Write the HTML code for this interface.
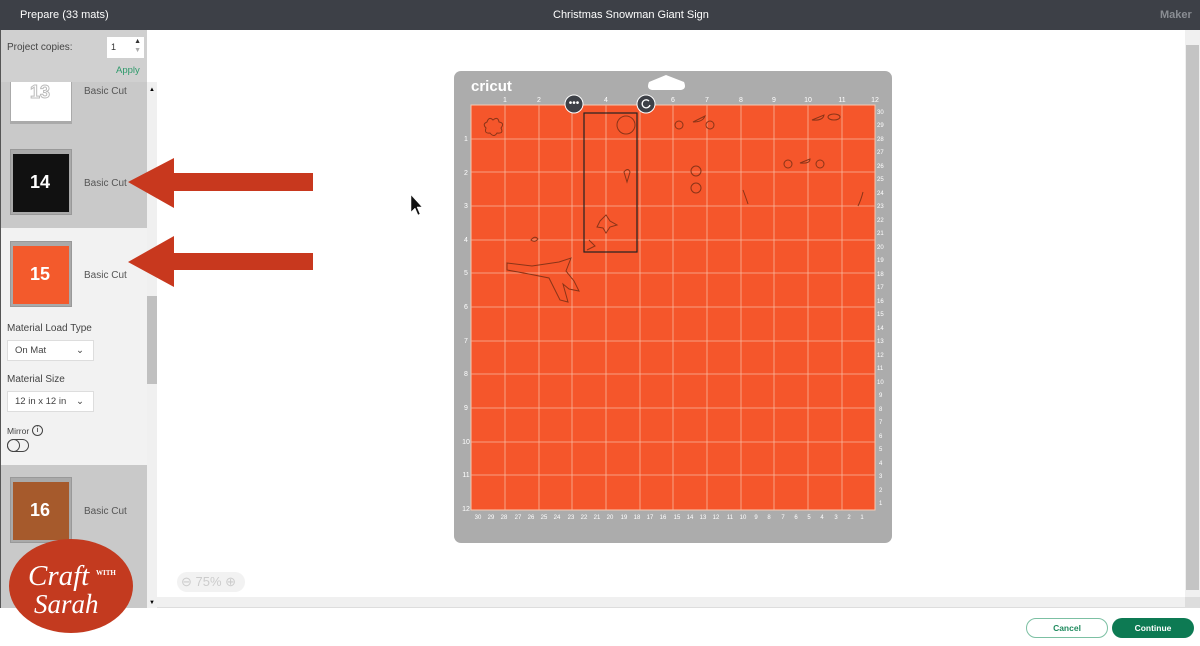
<!DOCTYPE html>
<html><head><meta charset="utf-8"><style>
*{margin:0;padding:0;box-sizing:border-box}
body{width:1200px;height:646px;overflow:hidden;background:#fff;font-family:"Liberation Sans",sans-serif;position:relative}
.abs{position:absolute}
.top{left:0;top:0;width:1200px;height:30px;background:#3d4047;color:#fff;font-size:11px}
.side{left:0;top:30px;width:147px;height:578px;background:#c9c9c9;border-left:1px solid #555}
.lbl{font-size:10px;color:#444}
.bc{font-size:10px;color:#555}
.sel{left:1px;top:228px;width:146px;height:237px;background:#f2f2f2}
.dd{background:#fff;border:1px solid #ddd;font-size:9.5px;color:#444;padding-left:7px;line-height:19px}
.thumb{width:62px;height:66px;background:#aaa;border:1px solid #999}
</style></head><body>
<div class="abs top"><span class="abs" style="left:20px;top:9px">Prepare (33 mats)</span><span class="abs" style="left:553px;top:9px">Christmas Snowman Giant Sign</span><span class="abs" style="left:1160px;top:9px;color:#8a8d93;font-weight:bold">Maker</span></div>
<div class="abs side"></div>
<div class="abs" style="left:1px;top:30px;width:146px;height:52px;background:#d0d0d0"></div>
<div class="abs lbl" style="left:7px;top:42px">Project copies:</div>
<div class="abs" style="left:107px;top:37px;width:37px;height:21px;background:#fff;font-size:9px;padding:5px 4px;color:#333">1<span class="abs" style="right:3px;top:1px;font-size:7px">▲</span><span class="abs" style="right:3px;top:10px;font-size:7px;color:#aaa">▼</span></div>
<div class="abs" style="left:116px;top:65px;font-size:9.5px;color:#2e9a6b">Apply</div>
<div class="abs" style="left:10px;top:82px;width:62px;height:42px;background:#fff;border:1px solid #aaa;border-top:none;border-bottom:3px solid #aaa"></div>
<div class="abs" style="left:30px;top:82px;font-size:18px;color:#fff;-webkit-text-stroke:1px #bbb;font-weight:bold">13</div>
<div class="abs bc" style="left:84px;top:86px">Basic Cut</div>
<div class="abs thumb" style="left:10px;top:149px"><div class="abs" style="left:2px;top:4px;width:56px;height:58px;background:#111"></div></div>
<div class="abs" style="left:30px;top:172px;font-size:18px;color:#fff;font-weight:bold">14</div>
<div class="abs bc" style="left:84px;top:178px">Basic Cut</div>
<div class="abs sel"></div>
<div class="abs thumb" style="left:10px;top:241px"><div class="abs" style="left:2px;top:4px;width:56px;height:58px;background:#f35a2c"></div></div>
<div class="abs" style="left:30px;top:264px;font-size:18px;color:#fff;font-weight:bold">15</div>
<div class="abs bc" style="left:84px;top:270px">Basic Cut</div>
<div class="abs lbl" style="left:7px;top:323px">Material Load Type</div>
<div class="abs dd" style="left:7px;top:340px;width:87px;height:21px">On Mat<span class="abs" style="left:68px;top:0">⌄</span></div>
<div class="abs lbl" style="left:7px;top:374px">Material Size</div>
<div class="abs dd" style="left:7px;top:391px;width:87px;height:21px">12 in x 12 in<span class="abs" style="left:68px;top:0">⌄</span></div>
<div class="abs lbl" style="left:7px;top:426px;font-size:8.5px">Mirror</div>
<div class="abs" style="left:32px;top:425px;width:11px;height:11px;border:1px solid #444;border-radius:50%;font-size:7px;text-align:center;line-height:9px">i</div>
<div class="abs" style="left:7px;top:439px;width:22px;height:13px;border:1px solid #444;border-radius:7px"><div class="abs" style="left:-1px;top:-1px;width:13px;height:13px;border:1px solid #444;border-radius:50%"></div></div>
<div class="abs thumb" style="left:10px;top:477px"><div class="abs" style="left:2px;top:4px;width:56px;height:58px;background:#a65a2c"></div></div>
<div class="abs" style="left:30px;top:500px;font-size:18px;color:#fff;font-weight:bold">16</div>
<div class="abs bc" style="left:84px;top:506px">Basic Cut</div>
<div class="abs" style="left:147px;top:82px;width:10px;height:526px;background:#f0f0f0"></div>
<div class="abs" style="left:147px;top:296px;width:10px;height:88px;background:#c0c0c0"></div>
<div class="abs" style="left:149px;top:87px;font-size:6px">▲</div>
<div class="abs" style="left:149px;top:600px;font-size:6px">▼</div>
<div class="abs" style="left:1185px;top:30px;width:15px;height:577px;background:#f0f0f0"></div>
<div class="abs" style="left:1186px;top:45px;width:13px;height:545px;background:#c4c4c4"></div>
<div class="abs" style="left:157px;top:597px;width:1028px;height:11px;background:#f0f0f0;border-bottom:1px solid #ddd"></div>
<div class="abs" style="left:1185px;top:597px;width:15px;height:11px;background:#ddd"></div>
<div class="abs" style="left:177px;top:572px;width:68px;height:20px;background:#f2f2f2;border-radius:10px;color:#ccc;font-size:13px;line-height:20px;padding-left:4px">⊖ 75% ⊕</div>
<div class="abs" style="left:1026px;top:618px;width:82px;height:20px;border:1px solid #7cc0a3;border-radius:10px;color:#1f8a5e;font-size:8.5px;font-weight:bold;text-align:center;line-height:18px">Cancel</div>
<div class="abs" style="left:1112px;top:618px;width:82px;height:20px;background:#0d7a53;border-radius:10px;color:#fff;font-size:8.5px;font-weight:bold;text-align:center;line-height:20px">Continue</div>
<svg class="abs" style="left:0;top:0" width="1200" height="646">
<rect x="454" y="71" width="438" height="472" rx="7" fill="#acacac"/>
<path d="M649 82 L666 75 L684 82 Q687 89 681 90 L652 90 Q646 89 649 82Z" fill="#fff"/>
<text x="471" y="91" fill="#fff" font-size="15" font-weight="bold" font-family="Liberation Sans">cricut</text>
<rect x="471" y="105" width="404" height="405" fill="#f5562b" stroke="#f8c8b0" stroke-width="1"/>
<g stroke="#f9b89e" stroke-width="0.8">
<line x1="505" y1="105" x2="505" y2="510"/><line x1="539" y1="105" x2="539" y2="510"/><line x1="572" y1="105" x2="572" y2="510"/><line x1="606" y1="105" x2="606" y2="510"/><line x1="640" y1="105" x2="640" y2="510"/><line x1="673" y1="105" x2="673" y2="510"/><line x1="707" y1="105" x2="707" y2="510"/><line x1="741" y1="105" x2="741" y2="510"/><line x1="774" y1="105" x2="774" y2="510"/><line x1="808" y1="105" x2="808" y2="510"/><line x1="842" y1="105" x2="842" y2="510"/>
<line x1="471" y1="139" x2="875" y2="139"/><line x1="471" y1="172" x2="875" y2="172"/><line x1="471" y1="206" x2="875" y2="206"/><line x1="471" y1="240" x2="875" y2="240"/><line x1="471" y1="273" x2="875" y2="273"/><line x1="471" y1="307" x2="875" y2="307"/><line x1="471" y1="341" x2="875" y2="341"/><line x1="471" y1="374" x2="875" y2="374"/><line x1="471" y1="408" x2="875" y2="408"/><line x1="471" y1="442" x2="875" y2="442"/><line x1="471" y1="475" x2="875" y2="475"/>
</g>
<g fill="#fff" font-size="7" font-family="Liberation Sans" text-anchor="middle">
<text x="505" y="102">1</text><text x="539" y="102">2</text><text x="606" y="102">4</text><text x="673" y="102">6</text><text x="707" y="102">7</text><text x="741" y="102">8</text><text x="774" y="102">9</text><text x="808" y="102">10</text><text x="842" y="102">11</text><text x="875" y="102">12</text>
<text x="466" y="141">1</text><text x="466" y="175">2</text><text x="466" y="208">3</text><text x="466" y="242">4</text><text x="466" y="275">5</text><text x="466" y="309">6</text><text x="466" y="343">7</text><text x="466" y="376">8</text><text x="466" y="410">9</text><text x="466" y="444">10</text><text x="466" y="477">11</text><text x="466" y="511">12</text>
</g>
<g fill="#fff" font-size="6" font-family="Liberation Sans" text-anchor="middle">
<text x="478" y="519">30</text><text x="491" y="519">29</text><text x="504" y="519">28</text><text x="518" y="519">27</text><text x="531" y="519">26</text><text x="544" y="519">25</text><text x="557" y="519">24</text><text x="571" y="519">23</text><text x="584" y="519">22</text><text x="597" y="519">21</text><text x="610" y="519">20</text><text x="624" y="519">19</text><text x="637" y="519">18</text><text x="650" y="519">17</text><text x="663" y="519">16</text><text x="677" y="519">15</text><text x="690" y="519">14</text><text x="703" y="519">13</text><text x="716" y="519">12</text><text x="730" y="519">11</text><text x="743" y="519">10</text><text x="756" y="519">9</text><text x="769" y="519">8</text><text x="783" y="519">7</text><text x="796" y="519">6</text><text x="809" y="519">5</text><text x="822" y="519">4</text><text x="836" y="519">3</text><text x="849" y="519">2</text><text x="862" y="519">1</text>
</g>
<g fill="#fff" font-size="6" font-family="Liberation Sans">
<text x="877" y="114">30</text><text x="877" y="127">29</text><text x="877" y="141">28</text><text x="877" y="154">27</text><text x="877" y="168">26</text><text x="877" y="181">25</text><text x="877" y="195">24</text><text x="877" y="208">23</text><text x="877" y="222">22</text><text x="877" y="235">21</text><text x="877" y="249">20</text><text x="877" y="262">19</text><text x="877" y="276">18</text><text x="877" y="289">17</text><text x="877" y="303">16</text><text x="877" y="316">15</text><text x="877" y="330">14</text><text x="877" y="343">13</text><text x="877" y="357">12</text><text x="877" y="370">11</text><text x="877" y="384">10</text><text x="879" y="397">9</text><text x="879" y="411">8</text><text x="879" y="424">7</text><text x="879" y="438">6</text><text x="879" y="451">5</text><text x="879" y="465">4</text><text x="879" y="478">3</text><text x="879" y="492">2</text><text x="879" y="505">1</text>
</g>
<g fill="none" stroke="#8a3418" stroke-width="1">
<path d="M487 122 q2-6 6-2 q5-4 6 2 q6 1 2 6 q3 6-4 5 q-3 5-7 0 q-6 1-4-5 q-4-4 1-6z"/>
<circle cx="626" cy="125" r="9"/>
<circle cx="679" cy="125" r="4"/><circle cx="710" cy="125" r="4"/>
<path d="M693 122 l12-6 q-2 6-12 6z"/>
<path d="M812 120 l12-5 q-1 6-12 5z"/><ellipse cx="834" cy="117" rx="6" ry="3"/>
<circle cx="788" cy="164" r="4"/><circle cx="820" cy="164" r="4"/><path d="M800 163 l10-4 q0 5-10 4z"/>
<path d="M624 172 q4-5 6 0 l-3 10z"/>
<circle cx="696" cy="171" r="5"/><circle cx="696" cy="188" r="5"/>
<path d="M743 190 q3 8 5 14"/><path d="M863 192 q-2 8-5 14"/>
<path d="M600 221 l6-6 l4 6 l7 4 l-7 2 l-4 6 l-3-5 l-6-1z"/>
<path d="M589 240 l6 6 l-8 4"/>
<path d="M531 240 q4-5 7-1 q-3 4-7 1z"/>
<path d="M507 263 l25 3 l27-4 l12-4 l-5 13 l8 10 l5 10 l-10 -2 l-6 -5 l5 18 l-8-2 l-6-12 l-5-10 l-20-4 l-22-4z"/>
</g>
<rect x="584" y="113" width="53" height="139" fill="none" stroke="#222" stroke-width="1.2"/>
<circle cx="574" cy="104" r="9" fill="#3d4047" stroke="#fff" stroke-width="1"/><text x="574" y="106" fill="#fff" font-size="10" text-anchor="middle" font-family="Liberation Sans">•••</text>
<circle cx="646" cy="104" r="9" fill="#3d4047" stroke="#fff" stroke-width="1"/><path d="M649 101 a4 4 0 1 0 1 4" fill="none" stroke="#fff" stroke-width="1.3"/>
<path d="M411 195 L411 212 L415 208 L418 215 L420 214 L417 207 L422 207Z" fill="#111" stroke="#fff" stroke-width="0.5"/>
<path d="M128 182 L174 158 L174 173 L313 173 L313 191 L174 191 L174 208Z" fill="#c8381e"/>
<path d="M128 262 L174 236 L174 253 L313 253 L313 270 L174 270 L174 287Z" fill="#c8381e"/>
<ellipse cx="71" cy="586" rx="62" ry="47" fill="#c33a1f"/>
<text x="28" y="585" fill="#fff" font-size="29" font-style="italic" font-family="Liberation Serif">Craft</text>
<text x="96" y="575" fill="#fff" font-size="7" font-weight="bold" font-family="Liberation Serif">WITH</text>
<text x="34" y="613" fill="#fff" font-size="27" font-style="italic" font-family="Liberation Serif">Sarah</text>
</svg>
</body></html>
